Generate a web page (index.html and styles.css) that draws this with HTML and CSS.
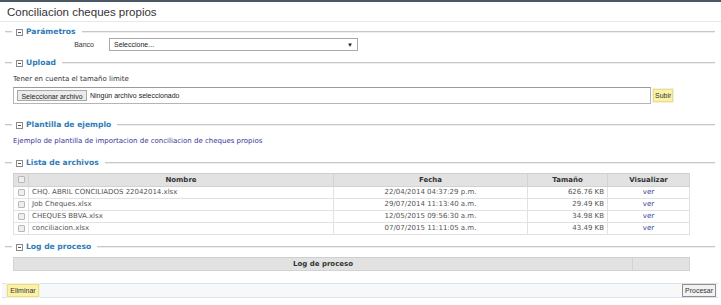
FILE: index.html
```html
<!DOCTYPE html>
<html lang="es">
<head>
<meta charset="utf-8">
<title>Conciliacion cheques propios</title>
<link rel="stylesheet" href="styles.css">
</head>
<body>
<div class="topbar"></div>
<div class="title">Conciliacion cheques propios</div>

<div class="sec-head">
  <span class="line-start"></span>
  <svg class="tog" width="7" height="7" viewBox="0 0 7 7"><rect x="0.5" y="0.5" width="6" height="6" fill="#fff" stroke="#8a8a8a"/><line x1="2" y1="3.5" x2="5" y2="3.5" stroke="#555"/></svg>
  <span class="sec-title">Parámetros</span>
  <span class="line-end"></span>
</div>
<div class="param-row">
  <label class="param-label">Banco</label>
  <div class="select"><span>Seleccione...</span><span class="arrow">▼</span></div>
</div>

<div class="sec-head mt-upload">
  <span class="line-start"></span>
  <svg class="tog" width="7" height="7" viewBox="0 0 7 7"><rect x="0.5" y="0.5" width="6" height="6" fill="#fff" stroke="#8a8a8a"/><line x1="2" y1="3.5" x2="5" y2="3.5" stroke="#555"/></svg>
  <span class="sec-title">Upload</span>
  <span class="line-end"></span>
</div>
<div class="note">Tener en cuenta el tamaño limite</div>
<div class="upload-row">
  <div class="filebox"><span class="btn-file">Seleccionar archivo</span><span class="nofile">Ningún archivo seleccionado</span></div>
  <span class="btn-yellow btn-subir">Subir</span>
</div>

<div class="sec-head mt-plantilla">
  <span class="line-start"></span>
  <svg class="tog" width="7" height="7" viewBox="0 0 7 7"><rect x="0.5" y="0.5" width="6" height="6" fill="#fff" stroke="#8a8a8a"/><line x1="2" y1="3.5" x2="5" y2="3.5" stroke="#555"/></svg>
  <span class="sec-title">Plantilla de ejemplo</span>
  <span class="line-end"></span>
</div>
<a class="example" href="#">Ejemplo de plantilla de importacion de conciliacion de cheques propios</a>

<div class="sec-head mt-lista">
  <span class="line-start"></span>
  <svg class="tog" width="7" height="7" viewBox="0 0 7 7"><rect x="0.5" y="0.5" width="6" height="6" fill="#fff" stroke="#8a8a8a"/><line x1="2" y1="3.5" x2="5" y2="3.5" stroke="#555"/></svg>
  <span class="sec-title">Lista de archivos</span>
  <span class="line-end"></span>
</div>
<table class="grid files">
  <colgroup><col class="c-chk"><col class="c-nom"><col class="c-fec"><col class="c-tam"><col class="c-vis"></colgroup>
  <thead>
    <tr><th><span class="chk"></span></th><th>Nombre</th><th>Fecha</th><th>Tamaño</th><th>Visualizar</th></tr>
  </thead>
  <tbody>
    <tr><td><span class="chk"></span></td><td class="l">CHQ. ABRIL CONCILIADOS 22042014.xlsx</td><td>22/04/2014 04:37:29 p.m.</td><td class="r">626.76 KB</td><td><a href="#">ver</a></td></tr>
    <tr><td><span class="chk"></span></td><td class="l">Job Cheques.xlsx</td><td>29/07/2014 11:13:40 a.m.</td><td class="r">29.49 KB</td><td><a href="#">ver</a></td></tr>
    <tr><td><span class="chk"></span></td><td class="l">CHEQUES BBVA.xlsx</td><td>12/05/2015 09:56:30 a.m.</td><td class="r">34.98 KB</td><td><a href="#">ver</a></td></tr>
    <tr><td><span class="chk"></span></td><td class="l">conciliacion.xlsx</td><td>07/07/2015 11:11:05 a.m.</td><td class="r">43.49 KB</td><td><a href="#">ver</a></td></tr>
  </tbody>
</table>

<div class="sec-head mt-log">
  <span class="line-start"></span>
  <svg class="tog" width="7" height="7" viewBox="0 0 7 7"><rect x="0.5" y="0.5" width="6" height="6" fill="#fff" stroke="#8a8a8a"/><line x1="2" y1="3.5" x2="5" y2="3.5" stroke="#555"/></svg>
  <span class="sec-title">Log de proceso</span>
  <span class="line-end"></span>
</div>
<table class="grid log">
  <colgroup><col class="c-log"><col class="c-log2"></colgroup>
  <thead><tr><th>Log de proceso</th><th></th></tr></thead>
</table>

<div class="actions">
  <span class="btn-yellow btn-elim">Eliminar</span>
  <span class="btn-gray">Procesar</span>
</div>
</body>
</html>
```

FILE: styles.css
```css
html, body { margin: 0; padding: 0; background: #fff; }
body { font-family: "DejaVu Sans", Verdana, sans-serif; color: #444; width: 721px; height: 305px; overflow: hidden; }

.topbar { height: 2px; background: #4a5866; }
.title {
  height: 19px; line-height: 21px; padding-left: 7px;
  font-family: "Liberation Sans", Arial, sans-serif; font-size: 11.5px; color: #333;
  border-bottom: 1px solid #e8e8e8;
}

.sec-head { display: flex; align-items: center; height: 10px; margin: 5px 6px 0 5px; }
.line-start { width: 7px; height: 1px; background: #c8c8c8; border-bottom: 1px solid #eee; }
.line-end { flex: 1; height: 1px; background: #c8c8c8; border-bottom: 1px solid #eee; margin-left: 6px; }
.tog { margin-left: 4px; margin-right: 3px; display: block; }
.sec-title { font-size: 7.6px; font-weight: bold; color: #2f7cb8; line-height: 10px; }

.mt-upload { margin-top: 7px; }
.mt-plantilla { margin-top: 16px; }
.mt-lista { margin-top: 12px; }
.mt-log { margin-top: 7px; }

.param-row { display: flex; align-items: center; margin-top: 1px; height: 13px; }
.param-label { width: 94px; margin-right: 15px; text-align: right; font-family: "Liberation Sans", Arial, sans-serif; font-size: 7px; color: #333; }
.select {
  width: 249px; height: 13px; box-sizing: border-box; border: 1px solid #a9a9a9; background: #fff;
  display: flex; align-items: center; justify-content: space-between; padding: 0 4px 0 4px;
  font-family: "Liberation Sans", Arial, sans-serif; font-size: 7px; color: #222;
}
.arrow { font-size: 6px; color: #222; }

.note { margin: 6px 0 0 13px; height: 10px; line-height: 10px; font-size: 7px; color: #333; }
.upload-row { display: flex; align-items: center; margin: 3px 0 0 13px; height: 17px; }
.filebox {
  width: 638px; height: 17px; box-sizing: border-box; border: 1px solid #b5b5b5; border-top-color: #9a9a9a;
  background: #fff; display: flex; align-items: center; padding-left: 3px;
  font-family: "Liberation Sans", Arial, sans-serif; font-size: 7px; color: #222;
}
.btn-file { border: 1px solid #a8a8a8; background: #ececec; height: 11px; line-height: 11px; padding: 0 3px; box-sizing: border-box; width: 70px; text-align: center; }
.nofile { margin-left: 3px; }
.btn-yellow {
  font-family: "Liberation Sans", Arial, sans-serif; font-size: 7px; color: #333;
  background: #fbf2a8; border: 1px solid #e6dc96; box-shadow: 0 0 0 1px #f6f2d6;
  height: 11px; line-height: 11px; padding: 0 2px; display: inline-block;
}
.btn-subir { margin-left: 2px; width: 16px; padding: 0 1px; text-align: center; }

.example { display: block; margin: 6px 0 0 13px; height: 10px; line-height: 10px; font-size: 7px; color: #36369a; text-decoration: none; }

.grid { border-collapse: collapse; table-layout: fixed; margin-left: 13px; font-size: 7px; color: #555; }
.files { width: 676px; margin-top: 5px; }
.c-chk { width: 15px; } .c-nom { width: 305px; } .c-fec { width: 194px; } .c-tam { width: 80px; } .c-vis { width: 82px; }
.grid th { background: #e2e2e2; font-weight: bold; color: #333; height: 12px; padding: 0; border: 1px solid #d2d2d2; border-top-color: #cfcfcf; text-align: center; line-height: 11px; }
.grid td { height: 11px; padding: 0 3px; border: 1px solid #e2e2e2; text-align: center; line-height: 11px; white-space: nowrap; overflow: hidden; }
.grid td:first-child { padding: 0; }
.grid td.l { text-align: left; padding-left: 3px; }
.grid td.r { text-align: right; padding-right: 3px; }
.grid a { color: #36369a; text-decoration: none; }
.chk { display: inline-block; width: 7px; height: 7px; border: 1px solid #b8b8b8; background: #eee; border-radius: 1px; vertical-align: middle; box-sizing: border-box; }

.log { width: 676px; margin-top: 5px; }
.c-log { width: 619px; } .c-log2 { width: 57px; }
.log th { height: 12px; }

.actions {
  margin: 12px 3px 0 2px; height: 15px; box-sizing: border-box; background: #f6f8fa;
  border-top: 1px solid #dde3ea; border-bottom: 1px solid #dde3ea;
  display: flex; align-items: center; justify-content: space-between; padding: 0 2px 0 5px;
}
.btn-elim { width: 26px; text-align: center; }
.btn-gray {
  font-family: "Liberation Sans", Arial, sans-serif; font-size: 7px; color: #333;
  background: #f2f2f2; border: 1px solid #8f8f8f; height: 11px; line-height: 11px; padding: 0 2px; display: inline-block;
}
```
